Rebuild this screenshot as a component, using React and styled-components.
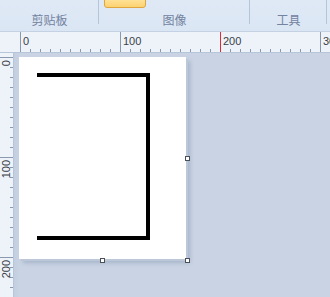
import React from "react";
import styled, { createGlobalStyle } from "styled-components";

const GlobalStyle = createGlobalStyle`
  html, body {
    margin: 0;
    padding: 0;
    background: #c9d3e4;
    overflow: hidden;
  }
  #root {
    width: 330px;
    height: 297px;
  }
`;

const Window = styled.div`
  width: 330px;
  height: 297px;
  display: flex;
  flex-direction: column;
  font-family: "Liberation Sans", Arial, sans-serif;
`;

const Ribbon = styled.div`
  height: 31px;
  display: flex;
  background: linear-gradient(#dfe9f6, #dbe6f4);
  border-bottom: 1px solid #c3d1e3;
  flex-shrink: 0;
`;

const Group = styled.div`
  width: ${(p) => p.w}px;
  flex-shrink: 0;
  position: relative;
  display: flex;
  flex-direction: column;
  align-items: center;
  justify-content: flex-end;
  padding-bottom: 4px;
  box-sizing: border-box;
  &::after {
    content: "";
    position: absolute;
    right: 0;
    top: 0;
    height: 24px;
    width: 1px;
    background: #b6c6da;
  }
`;

const GroupLabel = styled.span`
  font-family: "Noto Sans CJK SC", sans-serif;
  font-size: 12px;
  line-height: 14px;
  color: #7383a0;
`;

const ActiveButton = styled.div`
  position: absolute;
  left: 5px;
  top: -2px;
  width: 40px;
  height: 8px;
  border: 1px solid #e0a63e;
  border-radius: 0 0 3px 3px;
  background: linear-gradient(#ffe49a, #fdd171);
`;

const RulerRow = styled.div`
  height: 20px;
  display: flex;
  background: #eef3fa;
  border-bottom: 1px solid #b7c5d8;
  flex-shrink: 0;
`;

const Corner = styled.div`
  width: 20px;
  flex-shrink: 0;
`;

const HRuler = styled.div`
  flex: 1;
  display: flex;
  position: relative;
  overflow: hidden;
`;

const HSegment = styled.div`
  width: 100px;
  flex-shrink: 0;
  box-sizing: border-box;
  border-left: 1px solid #8a99ad;
  padding: 4px 0 0 2px;
  font-size: 11px;
  line-height: 11px;
  color: #3a3f47;
  background: repeating-linear-gradient(
      to right,
      transparent 0 9px,
      #8a99ad 9px 10px
    )
    left bottom / 100% 3px no-repeat;
`;

const Cursor = styled.div`
  position: absolute;
  left: 200px;
  top: 0;
  bottom: 0;
  width: 1px;
  background: #e02a38;
  z-index: 1;
`;

const Body = styled.div`
  flex: 1;
  display: flex;
  min-height: 0;
`;

const VRuler = styled.div`
  width: 13px;
  flex-shrink: 0;
  background: #eef3fa;
  border-right: 1px solid #b7c5d8;
  padding-top: 4px;
  overflow: hidden;
`;

const VSegment = styled.div`
  height: 100px;
  box-sizing: border-box;
  border-top: 1px solid #8a99ad;
  padding: 2px 0 0 1px;
  background: repeating-linear-gradient(
      to bottom,
      transparent 0 9px,
      #8a99ad 9px 10px
    )
    right top / 3px 100% no-repeat;
`;

const VLabel = styled.div`
  writing-mode: vertical-rl;
  transform: rotate(180deg);
  font-size: 11px;
  line-height: 11px;
  color: #3a3f47;
`;

const Workspace = styled.div`
  flex: 1;
  padding: 4px 0 0 5px;
  background: linear-gradient(to right, #c3cee0, #c9d3e4 6px);
`;

const Canvas = styled.div`
  position: relative;
  width: 167px;
  height: 202px;
  background: #ffffff;
  box-shadow: 2px 2px 0 #bcc7d8, 4px 4px 4px rgba(90, 110, 140, 0.3);
`;

const Handle = styled.div`
  position: absolute;
  width: 3px;
  height: 3px;
  background: #fff;
  border: 1px solid #4b4f57;
  left: ${(p) => p.x}px;
  top: ${(p) => p.y}px;
`;

const Drawing = styled.svg`
  position: absolute;
  left: 0;
  top: 0;
`;

const App = () => {
  return (
    <Window>
      <GlobalStyle />
      <Ribbon>
        <Group w={99}>
          <GroupLabel>剪贴板</GroupLabel>
        </Group>
        <Group w={151}>
          <ActiveButton />
          <GroupLabel>图像</GroupLabel>
        </Group>
        <Group w={77}>
          <GroupLabel>工具</GroupLabel>
        </Group>
      </Ribbon>
      <RulerRow>
        <Corner />
        <HRuler>
          {[0, 100, 200, 300].map((n) => (
            <HSegment key={n}>{n}</HSegment>
          ))}
          <Cursor />
        </HRuler>
      </RulerRow>
      <Body>
        <VRuler>
          {[0, 100, 200].map((n) => (
            <VSegment key={n}>
              <VLabel>{n}</VLabel>
            </VSegment>
          ))}
        </VRuler>
        <Workspace>
          <Canvas>
            <Drawing width="167" height="202">
              <polyline
                points="18,18 129,18 129,181 18,181"
                fill="none"
                stroke="#000"
                strokeWidth="4"
                strokeLinejoin="miter"
              />
            </Drawing>
            <Handle x={166} y={99} />
            <Handle x={166} y={201} />
            <Handle x={81} y={201} />
          </Canvas>
        </Workspace>
      </Body>
    </Window>
  );
};

export default App;
